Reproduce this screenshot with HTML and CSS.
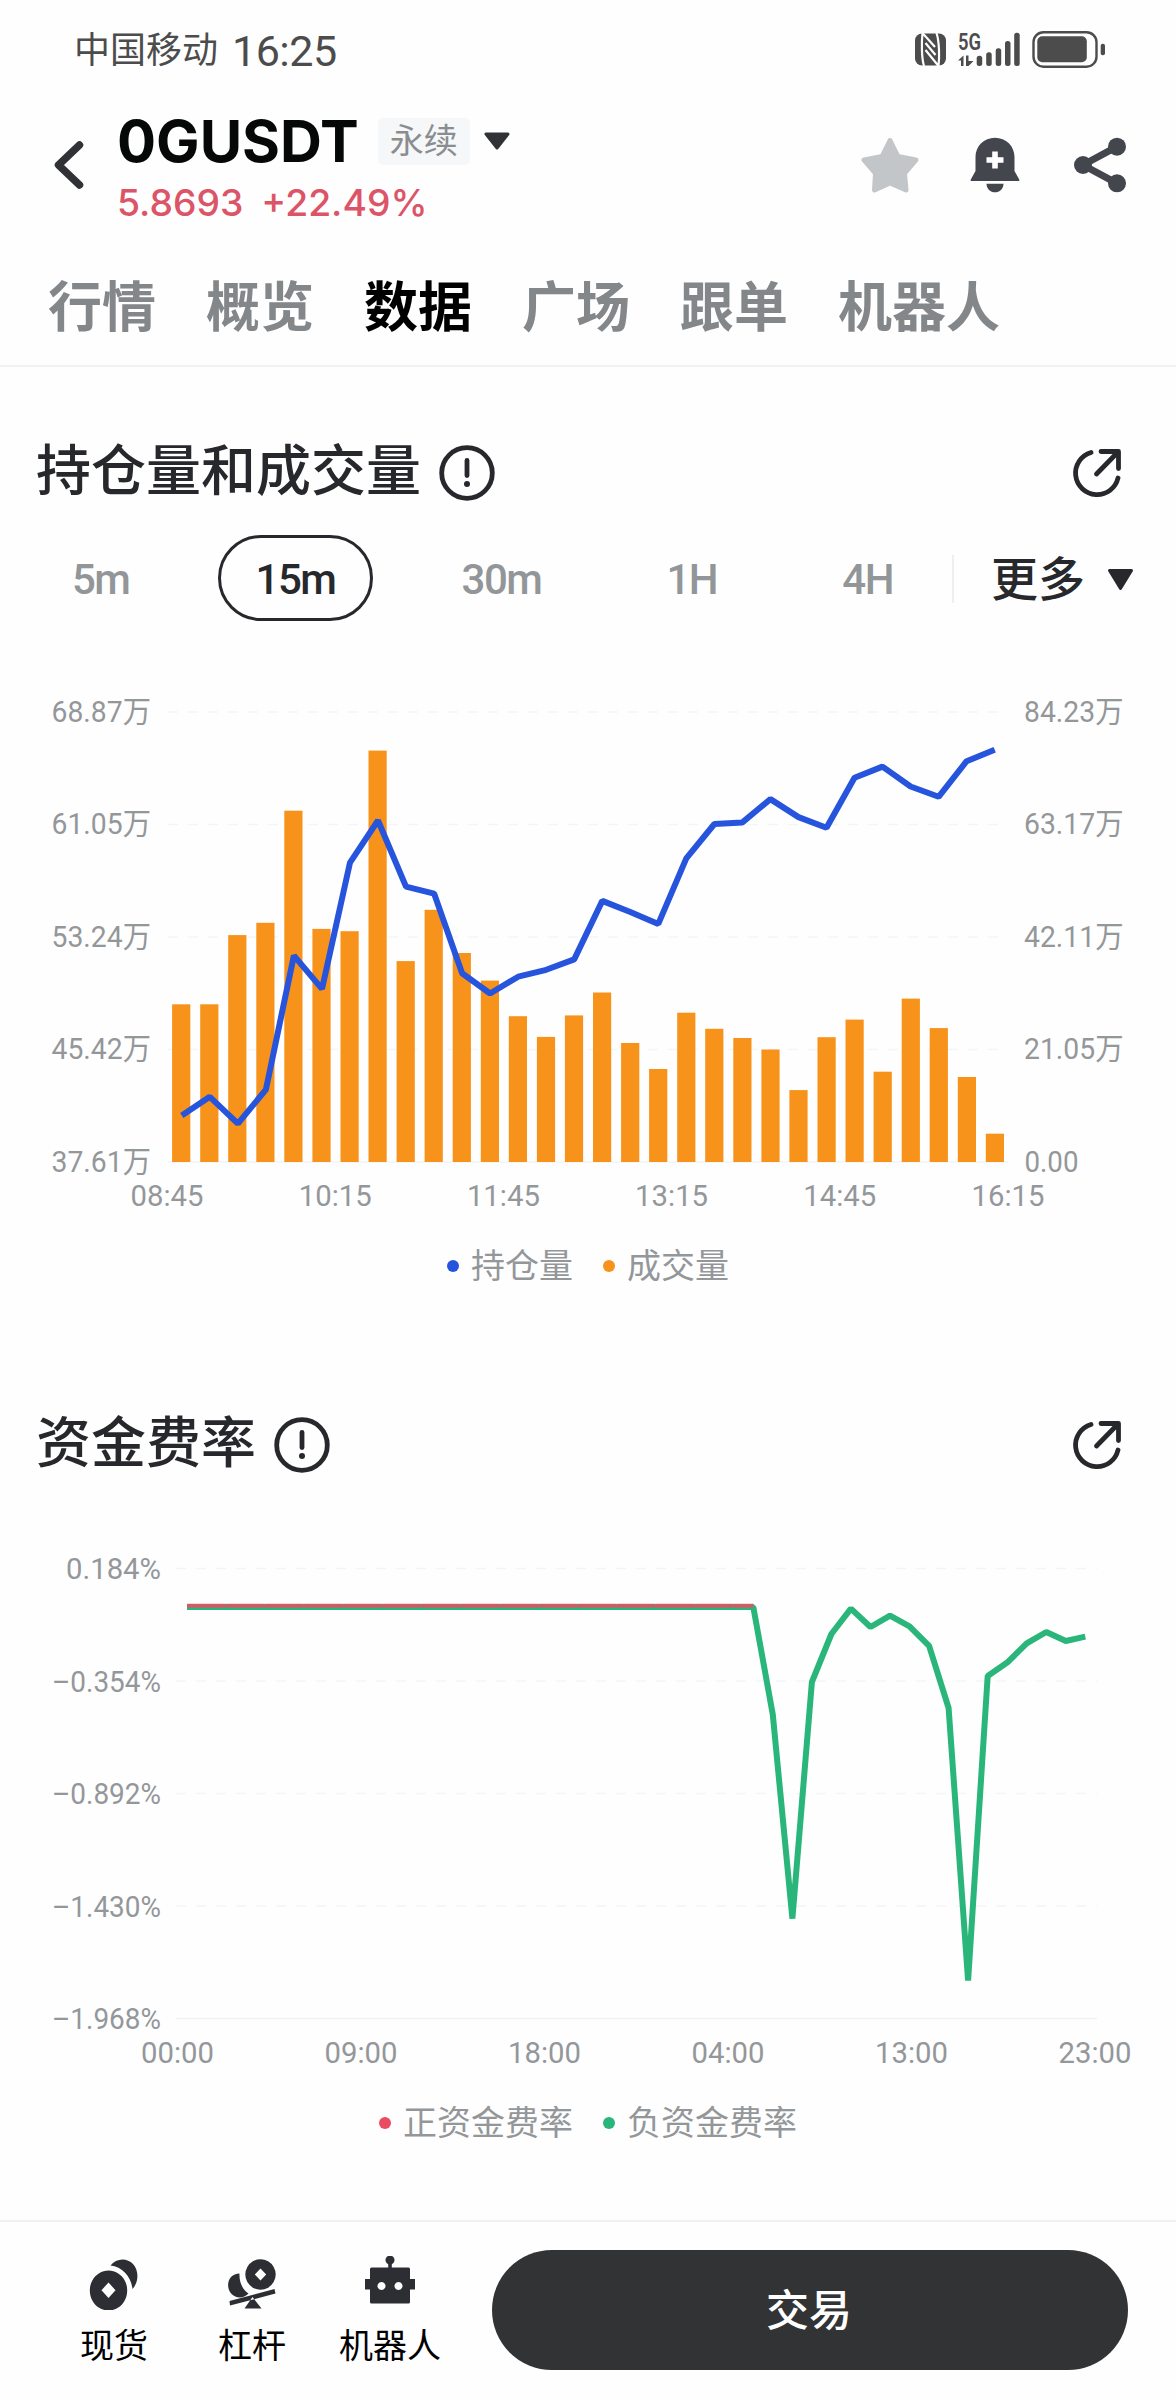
FILE: index.html
```html
<!DOCTYPE html>
<html lang="zh-CN">
<head>
  <meta charset="UTF-8">
  <title>0GUSDT 永续</title>
  <link rel="stylesheet" href="styles.css">
</head>
<body>
  <div class="page">
    <div class="status-bar">
      <span class="carrier">中国移动</span>
      <span class="clock">16:25</span>
      <svg class="status-icons" width="192" height="40" viewBox="0 0 192 40">
        <rect x="0" y="3.5" width="31" height="32" rx="7"/>
        <path class="nfc" d="M9 36C6.500 28 6.500 12 7.500 3L20 17M10.500 13L20.500 25M10.500 20L23.500 36C24.500 28 24.500 12 21.500 3"/>
        <text class="net" x="43" y="20" textLength="23" lengthAdjust="spacingAndGlyphs">5G</text>
        <path d="M43 30.500l5.500-5V36h-2.500v-5.500zM51 25.500h2.500V31h5L53.500 36H51z"/>
        <rect x="61.700" y="25.700" width="5.500" height="10.300" rx="2.500"/>
        <rect x="71.200" y="22.300" width="5.500" height="13.700" rx="2.500"/>
        <rect x="80.700" y="18.300" width="5.500" height="17.700" rx="2.500"/>
        <rect x="90" y="11" width="5.500" height="25" rx="2.500"/>
        <rect x="99.200" y="2.700" width="5.500" height="33.300" rx="2.500"/>
        <rect class="battery" x="118.500" y="2.200" width="63" height="34.500" rx="10"/>
        <rect x="122.300" y="6.300" width="49.500" height="26" rx="5"/>
        <rect x="185.700" y="13.700" width="4.300" height="11.500" rx="2"/>
      </svg>
    </div>

    <div class="header">
      <svg class="back" width="30" height="48" viewBox="0 0 30 48">
        <path d="M25.500 4L4.500 24L25.500 44"/>
      </svg>
      <div class="pair">
        <div class="pair-row">
          <span class="symbol">0GUSDT</span>
          <span class="tag">永续</span>
          <svg width="26" height="18" viewBox="0 0 26 18">
            <path class="caret" d="M2 2h22L13 16z"/>
          </svg>
        </div>
        <div class="price-row">
          <span class="price">5.8693</span>
          <span class="change">+22.49%</span>
        </div>
      </div>
      <div class="actions">
        <svg width="58" height="56" viewBox="0 0 58 56">
          <path class="star" d="M29 3.500L37 19.500L55 23L43.500 36.500L45 53L29 46L13.500 53L14.500 36.500L3 23L21 19.500z"/>
        </svg>
        <svg class="bell" width="50" height="56" viewBox="0 0 50 56">
          <path d="M25 .7C36 .7 44.500 9 44.500 20V34L49.500 43Q49.500 44 48.500 44H1.500Q.5 44 .5 43L5.500 34V20C5.500 9 14 .7 25 .7z"/>
          <path d="M16.500 46.700h17c0 5-4 8.600-8.500 8.600s-8.500-3.600-8.500-8.600z"/>
          <path class="plus" d="M25 14.500v17M16.500 23h17"/>
        </svg>
        <svg class="share" width="52" height="56" viewBox="0 0 52 56">
          <path d="M43 9.700L9 28L43 46.300"/>
          <circle cx="43" cy="9.700" r="9"/>
          <circle cx="9" cy="28" r="9"/>
          <circle cx="43" cy="46.300" r="9"/>
        </svg>
      </div>
    </div>

    <div class="tabs">
      <span>行情</span>
      <span>概览</span>
      <span class="active">数据</span>
      <span>广场</span>
      <span>跟单</span>
      <span>机器人</span>
    </div>

    <div class="section">
      <div class="section-head">
        <h2>持仓量和成交量</h2>
        <svg class="info" width="56" height="56" viewBox="0 0 56 56">
          <circle cx="28" cy="28" r="25.300"/>
          <path d="M28 15.500v15"/>
          <circle class="dot" cx="28" cy="39" r="3"/>
        </svg>
        <svg class="open" width="50" height="50" viewBox="0 0 50 50">
          <path d="M19 4.500A21.500 21.500 0 1 0 46 30"/>
          <path d="M29 3.500H46.500V20.500M46 4L24.500 26"/>
        </svg>
      </div>

      <div class="periods">
        <div class="period-list">
          <span>5m</span>
          <span class="active">15m</span>
          <span>30m</span>
          <span>1H</span>
          <span>4H</span>
        </div>
        <div class="more">
          <span>更多</span>
          <svg width="27" height="23" viewBox="0 0 27 23">
            <path class="caret" d="M2.500 2.500h22L13.500 20.500z"/>
          </svg>
        </div>
      </div>

      <svg class="chart" id="oi-chart" width="1176" height="540"></svg>

      <div class="legend">
        <span><i class="blue"></i>持仓量</span>
        <span><i class="orange"></i>成交量</span>
      </div>
    </div>

    <div class="section funding">
      <div class="section-head">
        <h2>资金费率</h2>
        <svg class="info" width="56" height="56" viewBox="0 0 56 56">
          <circle cx="28" cy="28" r="25.300"/>
          <path d="M28 15.500v15"/>
          <circle class="dot" cx="28" cy="39" r="3"/>
        </svg>
        <svg class="open" width="50" height="50" viewBox="0 0 50 50">
          <path d="M19 4.500A21.500 21.500 0 1 0 46 30"/>
          <path d="M29 3.500H46.500V20.500M46 4L24.500 26"/>
        </svg>
      </div>

      <svg class="chart" id="funding-chart" width="1176" height="540"></svg>

      <div class="legend">
        <span><i class="red"></i>正资金费率</span>
        <span><i class="green"></i>负资金费率</span>
      </div>
    </div>

    <div class="bottom-bar">
      <div class="nav-item">
        <svg width="50" height="54" viewBox="0 0 50 54">
          <path d="M21.500 9.500C27 2 38 1.500 44 8C50 14.500 50 26 43.500 33C42.500 21 33 10.500 21.500 9.500z"/>
          <path fill-rule="evenodd" d="M19.500 14.500a18.700 20 0 1 0 .01 0zM19.500 26.500l7 7.700l-7 7.700l-7-7.700z"/>
        </svg>
        <span>现货</span>
      </div>
      <div class="nav-item">
        <svg width="50" height="54" viewBox="0 0 50 54">
          <path fill-rule="evenodd" d="M33.500 3.300a15.200 15.200 0 1 0 .01 0zM33.500 12.500l5.700 6l-5.700 6l-5.700-6z"/>
          <path d="M12.500 17.500C12 26 15.500 34 21.500 37.500C15 44 5.500 42 2 34C-1 25.500 4 17.500 12.500 17.500z"/>
          <path d="M3 49.500L48.500 37.500L47.500 33L2.500 45zM25.500 41L34.500 52.500H17.500z"/>
        </svg>
        <span>杠杆</span>
      </div>
      <div class="nav-item">
        <svg width="50" height="54" viewBox="0 0 50 54">
          <path fill-rule="evenodd" d="M23.200 11.500V8.200a4.500 4.500 0 1 1 3.600 0V11.500H43.500Q45 11.500 45 13V23h5v10.500h-5V46Q45 47.500 43.500 47.500H6.500Q5 47.500 5 46V33.500H0V23H5V13Q5 11.500 6.500 11.500zM16.500 26a4 4 0 1 0 .01 0zM33.500 26a4 4 0 1 0 .01 0z"/>
        </svg>
        <span>机器人</span>
      </div>
      <button class="trade">交易</button>
    </div>
  </div>

  <script>
    const volume = [157.7, 157.7, 226.9, 239.2, 351.3, 233.1, 230.8, 411.4, 200.9, 252.2,
      209, 181.4, 145.8, 125.1, 146.6, 169.5, 119, 93, 149.3, 133.2,
      124, 112.5, 71.9, 124.8, 142.4, 90.3, 163.4, 133.9, 85, 28.3];
    const openInterest = [403.6, 384.8, 411.6, 377.6, 243.6, 276.9, 150.6, 108.5, 174.7, 181.6,
      261.2, 281.5, 264.7, 257.8, 247.4, 188.9, 200, 211.9, 146.4, 112,
      110.4, 87.1, 105.1, 115.8, 65.7, 54.6, 74.5, 84.8, 49.2, 37.7];
    const funding = [38.4, 146, 350, 113.4, 65.4, 40, 58.4, 47, 57.8, 77.2,
      139.4, 412, 107.3, 94, 74.7, 63.4, 72.4, 68];
    const plotHeight = 450;
    const rowHeight = plotHeight / 4;

    function label(x, y, width, text, anchor) {
      return `<text x="${x}" y="${y}" text-anchor="${anchor}" textLength="${width}" lengthAdjust="spacingAndGlyphs">${text}</text>`;
    }

    function gridLines(x1, x2) {
      let out = "";
      for (let i = 0; i < 4; i++) {
        out += `<line class="grid" x1="${x1}" x2="${x2}" y1="${i * rowHeight}" y2="${i * rowHeight}"/>`;
      }
      return out + `<line class="axis" x1="${x1}" x2="${x2}" y1="${plotHeight}" y2="${plotHeight}"/>`;
    }

    function points(values, start, step) {
      return values.map((v, i) => `${(start + i * step).toFixed(1)},${v}`).join(" ");
    }

    function drawOpenInterest() {
      let out = gridLines(168, 1008);
      volume.forEach((v, i) => {
        out += `<rect class="bar" x="${(172.1 + i * 28.06).toFixed(1)}" y="${(plotHeight - v).toFixed(1)}" width="18.2" height="${v}"/>`;
      });
      out += `<polyline class="oi-line" points="${points(openInterest, 181.8, 28.03)}"/>`;
      ["68.87万", "61.05万", "53.24万", "45.42万", "37.61万"].forEach((t, i) => {
        out += label(51.5, i * rowHeight + 9.5, 99.5, t, "start");
      });
      ["84.23万", "63.17万", "42.11万", "21.05万"].forEach((t, i) => {
        out += label(1024, i * rowHeight + 9.5, 99.5, t, "start");
      });
      out += label(1024.5, plotHeight + 9.5, 54, "0.00", "start");
      ["08:45", "10:15", "11:45", "13:15", "14:45", "16:15"].forEach((t, i) => {
        out += label(167 + i * 168.2, plotHeight + 44, 73, t, "middle");
      });
      document.getElementById("oi-chart").innerHTML = `<g transform="translate(0 32)">${out}</g>`;
    }

    function drawFunding() {
      let out = gridLines(176, 1097);
      out += `<polyline class="neg-line" points="187,38.4 ${points(funding, 753.3, 19.53)}"/>`;
      out += `<line class="pos-line" x1="187" x2="753.3" y1="37.2" y2="37.2"/>`;
      out += label(161, 10.5, 95, "0.184%", "end");
      ["–0.354%", "–0.892%", "–1.430%", "–1.968%"].forEach((t, i) => {
        out += label(161, (i + 1) * rowHeight + 10.5, 109, t, "end");
      });
      ["00:00", "09:00", "18:00", "04:00", "13:00", "23:00"].forEach((t, i) => {
        out += label(177.5 + i * 183.5, plotHeight + 44, 73, t, "middle");
      });
      document.getElementById("funding-chart").innerHTML = `<g transform="translate(0 28.6)">${out}</g>`;
    }

    drawOpenInterest();
    drawFunding();
  </script>
</body>
</html>
```

FILE: styles.css
```css
body {
  margin: 0;
  background: #fefefe;
  color: #26282c;
  font-family: Roboto, "Noto Sans CJK SC", sans-serif;
}
.page {
  width: 1176px;
  height: 2400px;
  display: flex;
  flex-direction: column;
  overflow: hidden;
}
svg {
  display: block;
  flex-shrink: 0;
}
.caret {
  fill: currentColor;
  stroke: currentColor;
  stroke-width: 3;
  stroke-linejoin: round;
}

/* status bar */
.status-bar {
  display: flex;
  align-items: center;
  height: 100px;
  box-sizing: border-box;
  padding: 0 69px 0 74px;
  color: #4c4c4c;
}
.carrier {
  padding-top: 2px;
  font-size: 36px;
  line-height: 40px;
}
.clock {
  margin-left: 14px;
  padding-top: 1px;
  font-size: 43px;
  letter-spacing: -0.5px;
  line-height: 40px;
}
.status-icons {
  margin-left: auto;
  fill: #4c4c4c;
}
.status-icons .nfc {
  fill: none;
  stroke: #fefefe;
  stroke-width: 2.2;
}
.status-icons .net {
  font-size: 23px;
  font-weight: 600;
}
.status-icons .battery {
  fill: none;
  stroke: #4c4c4c;
  stroke-width: 2.4;
}

/* header */
.header {
  display: flex;
  align-items: center;
  height: 130px;
  padding: 0 50px 0 54px;
}
.back path {
  fill: none;
  stroke: #303236;
  stroke-width: 7.5;
  stroke-linecap: round;
  stroke-linejoin: round;
}
.pair {
  margin-left: 33px;
  padding-top: 14px;
}
.pair-row {
  display: flex;
  align-items: center;
  height: 62px;
  color: #303236;
}
.symbol {
  font-family: Inter, sans-serif;
  font-size: 58px;
  font-weight: 700;
  line-height: 62px;
  color: #060707;
}
.tag {
  margin: 0 14px 0 19px;
  padding: 0 12px;
  border-radius: 5px;
  background: #f5f7f9;
  color: #8a8d90;
  font-size: 34px;
  line-height: 47px;
}
.price-row {
  display: flex;
  gap: 18px;
  font-family: Inter, sans-serif;
  font-size: 37.3px;
  font-weight: 500;
  line-height: 62px;
  color: #dc5468;
}
.actions {
  display: flex;
  gap: 54px;
  margin-left: auto;
}
.actions > :first-child {
  margin-right: -3px;
}
.star {
  fill: #c3c6c9;
  stroke: #c3c6c9;
  stroke-width: 5;
  stroke-linejoin: round;
}
.bell {
  fill: #43464d;
}
.bell .plus {
  stroke: #fff;
  stroke-width: 5.6;
}
.share circle {
  fill: #43464d;
}
.share path {
  fill: none;
  stroke: #43464d;
  stroke-width: 7;
}

.tabs {
  display: flex;
  gap: 50px;
  height: 135px;
  padding-left: 48px;
  border-bottom: 2px solid #f0f1f2;
  font-size: 54px;
  font-weight: 700;
  line-height: 157px;
  color: #84878a;
}
.tabs .active {
  color: #000;
}

/* sections */
.section {
  padding-top: 78px;
}
.funding {
  padding-top: 131px;
}
.section-head {
  display: flex;
  align-items: center;
  height: 56px;
  padding: 0 54px 0 36px;
}
h2 {
  margin: 0 18px 0 0;
  padding-bottom: 4px;
  font-size: 55px;
  font-weight: 500;
  line-height: 56px;
}
.info,
.open {
  fill: none;
  stroke: #26282c;
  stroke-width: 4.8;
  stroke-linecap: round;
  stroke-linejoin: round;
}
.info .dot {
  fill: #26282c;
  stroke: none;
}
.open {
  margin-left: auto;
}

.periods {
  display: flex;
  align-items: center;
  height: 86px;
  margin-top: 35px;
}
.period-list {
  display: flex;
  justify-content: space-between;
  width: 895px;
  margin-left: 35px;
  font-size: 42px;
  font-weight: 500;
  letter-spacing: -1.5px;
  line-height: 89px;
  color: #939699;
}
.period-list span {
  padding: 0 37px;
}
.period-list .active {
  padding: 0 35px;
  border: 3px solid #26282c;
  border-radius: 43px;
  height: 80px;
  line-height: 83px;
  color: #26282c;
}
.more {
  display: flex;
  align-items: center;
  gap: 22px;
  height: 48px;
  margin-left: 22px;
  padding-left: 37px;
  border-left: 2px solid #eeeff2;
  font-size: 47px;
  font-weight: 500;
}
.more span {
  padding-bottom: 7px;
}

/* charts */
.chart {
  margin-top: 58px;
}
.funding .chart {
  margin-top: 67px;
}
.chart text {
  font-size: 30px;
  fill: #94979a;
}
.grid {
  stroke: #f4f5f6;
  stroke-width: 1.5;
  stroke-dasharray: 10 10;
}
.axis {
  stroke: #f2f3f4;
  stroke-width: 1.5;
}
.bar {
  fill: #f7931a;
}
.oi-line,
.neg-line {
  fill: none;
  stroke: #2754dc;
  stroke-width: 6;
  stroke-linejoin: bevel;
}
.neg-line {
  stroke: #2ab67b;
}
.pos-line {
  stroke: #ea4d62;
  stroke-width: 4;
  stroke-opacity: 0.85;
  stroke-dasharray: 38.6 0.46;
}
.legend {
  display: flex;
  justify-content: center;
  gap: 30px;
  height: 40px;
  margin-top: 26px;
  font-size: 34px;
  line-height: 43px;
  color: #94979a;
}
.funding .legend {
  margin-top: 23px;
}
.legend span {
  display: flex;
  align-items: center;
  gap: 12px;
}
.legend i {
  width: 12px;
  height: 12px;
  border-radius: 50%;
}
.blue { background: #2754dc; }
.orange { background: #f7931a; }
.red { background: #ea4d62; }
.green { background: #2ab67b; }

/* bottom bar */
.bottom-bar {
  display: flex;
  align-items: flex-start;
  height: 150px;
  margin-top: auto;
  padding: 28px 48px 0 45px;
  border-top: 2px solid #f0f1f2;
}
.nav-item {
  display: flex;
  flex-direction: column;
  align-items: center;
  width: 138px;
  padding-top: 6px;
  color: #000;
  font-size: 34px;
  line-height: 40px;
}
.nav-item svg {
  margin-bottom: 16px;
  fill: #2c2e33;
}
.trade {
  flex: 1;
  height: 120px;
  margin-left: 33px;
  padding: 0 2px 6px 0;
  border: 0;
  border-radius: 60px;
  background: #323335;
  color: #fff;
  font-family: inherit;
  font-size: 43px;
  font-weight: 500;
}
```
